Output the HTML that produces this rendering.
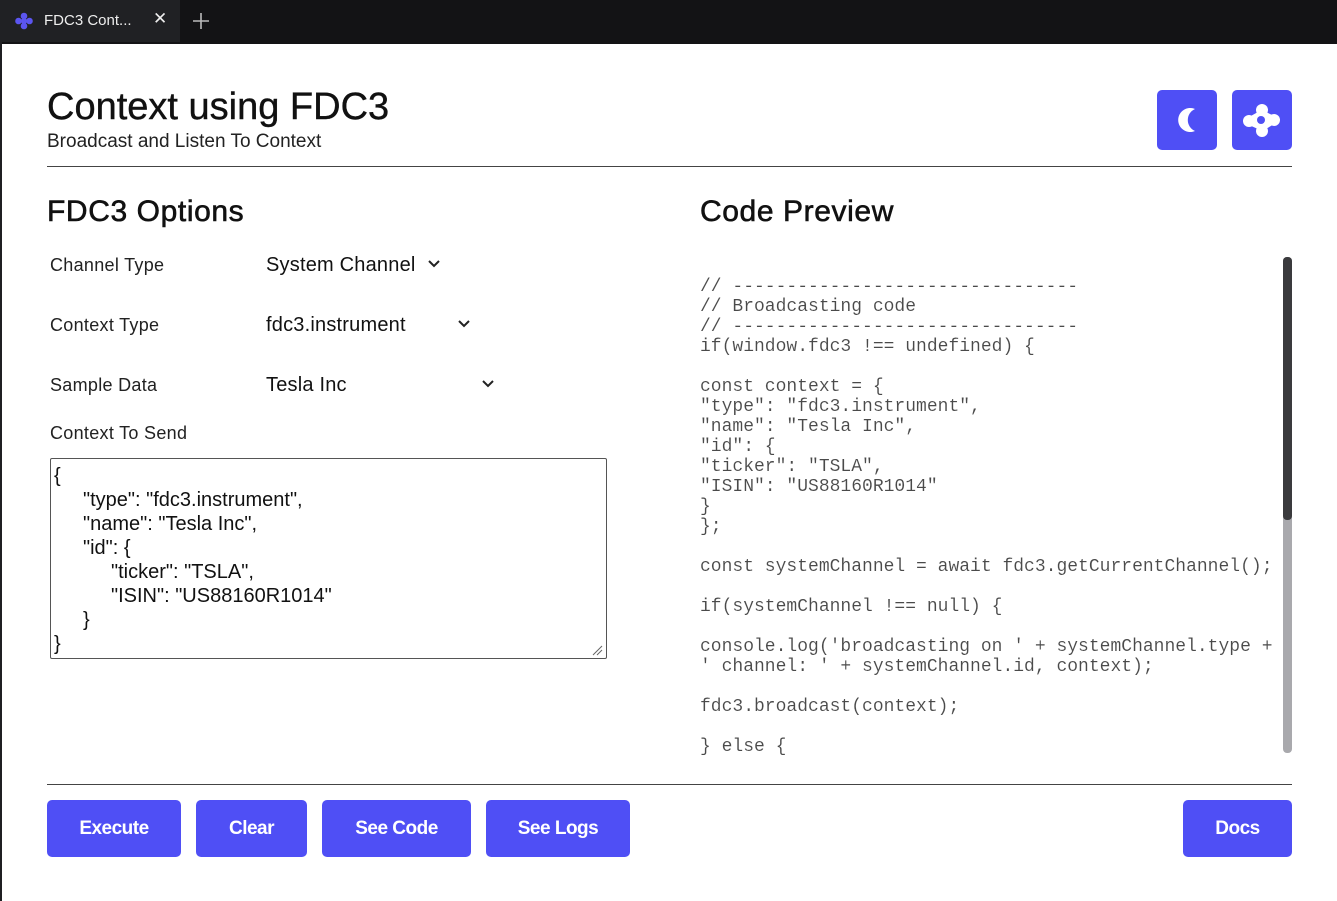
<!DOCTYPE html>
<html><head><style>
*{margin:0;padding:0;box-sizing:border-box}
body{width:1337px;height:901px;overflow:hidden;background:#fff;font-family:"Liberation Sans",sans-serif;color:#111;position:relative}
.top{position:absolute;left:0;top:0;width:1337px;height:44px;background:#131315}
.tab{position:absolute;left:0;top:0;width:180px;height:42px;background:#202124;color:#eee;font-size:15px}
.frame{position:absolute;left:0;top:42px;width:2px;height:859px;background:#1f1f22}
.abs{position:absolute}
.btn{position:absolute;top:800px;height:57px;background:#4f4ff5;color:#fff;font-weight:bold;font-size:19px;border-radius:5px;display:flex;align-items:center;justify-content:center;letter-spacing:-0.5px}
.lbl{position:absolute;left:50px;font-size:18px;color:#222;letter-spacing:0.3px}
.sel{position:absolute;left:266px;font-size:20px;color:#111;letter-spacing:0.2px}
.code{position:absolute;left:700px;top:277px;font-family:"Liberation Mono",monospace;font-size:18px;line-height:20px;color:#4a4a4a;white-space:pre;-webkit-text-stroke:0.1px #fff}
.h2{position:absolute;top:195px;font-size:30px;color:#111;letter-spacing:0.6px;-webkit-text-stroke:0.6px #111}
svg.chev{position:absolute}
.ta div{height:24px;white-space:pre}
</style></head><body>
<div class="top"></div>
<div class="tab">
<svg class="abs" style="left:14px;top:12px" width="20" height="18" viewBox="0 0 20 18"><g fill="#5b55f0"><circle cx="10" cy="4" r="3.3"/><circle cx="4.5" cy="9" r="3.3"/><circle cx="15.5" cy="9" r="3.3"/><circle cx="10" cy="14" r="3.3"/><circle cx="10" cy="9" r="3"/></g></svg>
<span class="abs" style="left:44px;top:12px">FDC3 Cont...</span>
<span class="abs" style="left:153px;top:9px;font-size:17px">✕</span>
</div>
<svg class="abs" style="left:191px;top:11px" width="20" height="20"><path d="M10 2V18M2 10H18" stroke="#bbb" stroke-width="1.6"/></svg>
<div class="frame"></div>

<div class="abs" style="left:47px;top:86px;font-size:38px;color:#111;letter-spacing:0px;-webkit-text-stroke:0.4px #111">Context using FDC3</div>
<div class="abs" style="left:47px;top:131px;font-size:19px;color:#222;letter-spacing:0px">Broadcast and Listen To Context</div>
<div class="abs" style="left:1157px;top:90px;width:60px;height:60px;background:#4f4ff5;border-radius:5px">
<svg width="60" height="60"><path d="M38 19A12 12 0 1 0 38 41A12 12 0 0 1 38 19Z" fill="#fff"/></svg></div>
<div class="abs" style="left:1232px;top:90px;width:60px;height:60px;background:#4f4ff5;border-radius:5px">
<svg width="60" height="60"><g fill="#fff"><circle cx="30" cy="20" r="6"/><circle cx="17" cy="31" r="6"/><circle cx="42" cy="30" r="6"/><circle cx="30" cy="41" r="6"/><path d="M26 22L34 22L42 26L42 34L34 39L26 39L17 35L17 27Z"/></g><circle cx="29" cy="30" r="4" fill="#4f4ff5"/></svg></div>
<div class="abs" style="left:47px;top:166px;width:1245px;height:1px;background:#444"></div>

<div class="h2" style="left:47px">FDC3 Options</div>
<div class="h2" style="left:700px">Code Preview</div>

<div class="lbl" style="top:255px">Channel Type</div>
<div class="sel" style="top:254px">System Channel</div>
<svg class="chev" style="left:427px;top:259px" width="14" height="10"><path d="M2 2L7 7L12 2" stroke="#222" stroke-width="2" fill="none"/></svg>
<div class="lbl" style="top:315px">Context Type</div>
<div class="sel" style="top:314px">fdc3.instrument</div>
<svg class="chev" style="left:457px;top:319px" width="14" height="10"><path d="M2 2L7 7L12 2" stroke="#222" stroke-width="2" fill="none"/></svg>
<div class="lbl" style="top:375px">Sample Data</div>
<div class="sel" style="top:374px">Tesla Inc</div>
<svg class="chev" style="left:481px;top:379px" width="14" height="10"><path d="M2 2L7 7L12 2" stroke="#222" stroke-width="2" fill="none"/></svg>
<div class="lbl" style="top:423px">Context To Send</div>
<div class="abs ta" style="left:50px;top:458px;width:557px;height:201px;border:1px solid #555;border-radius:2px;font-size:20px;line-height:24px;padding:5px 0 0 3px;color:#111"><div>{</div><div style="padding-left:29px">"type": "fdc3.instrument",</div><div style="padding-left:29px">"name": "Tesla Inc",</div><div style="padding-left:29px">"id": {</div><div style="padding-left:57px">"ticker": "TSLA",</div><div style="padding-left:57px">"ISIN": "US88160R1014"</div><div style="padding-left:29px">}</div><div>}</div></div>
<svg class="abs" style="left:591px;top:644px" width="12" height="12"><path d="M2 11L11 2M6 11L11 6" stroke="#666" stroke-width="1"/></svg>

<div class="code">// --------------------------------
// Broadcasting code
// --------------------------------
if(window.fdc3 !== undefined) {

const context = {
"type": "fdc3.instrument",
"name": "Tesla Inc",
"id": {
"ticker": "TSLA",
"ISIN": "US88160R1014"
}
};

const systemChannel = await fdc3.getCurrentChannel();

if(systemChannel !== null) {

console.log('broadcasting on ' + systemChannel.type +
' channel: ' + systemChannel.id, context);

fdc3.broadcast(context);

} else {</div>
<div class="abs" style="left:1283px;top:257px;width:9px;height:496px;background:#a9a9ad;border-radius:4px"></div>
<div class="abs" style="left:1283px;top:257px;width:9px;height:263px;background:#3a3a3d;border-radius:4px"></div>

<div class="abs" style="left:47px;top:784px;width:1245px;height:1px;background:#444"></div>
<div class="btn" style="left:47px;width:134px">Execute</div>
<div class="btn" style="left:196px;width:111px">Clear</div>
<div class="btn" style="left:322px;width:149px">See Code</div>
<div class="btn" style="left:486px;width:144px">See Logs</div>
<div class="btn" style="left:1183px;width:109px">Docs</div>
</body></html>
